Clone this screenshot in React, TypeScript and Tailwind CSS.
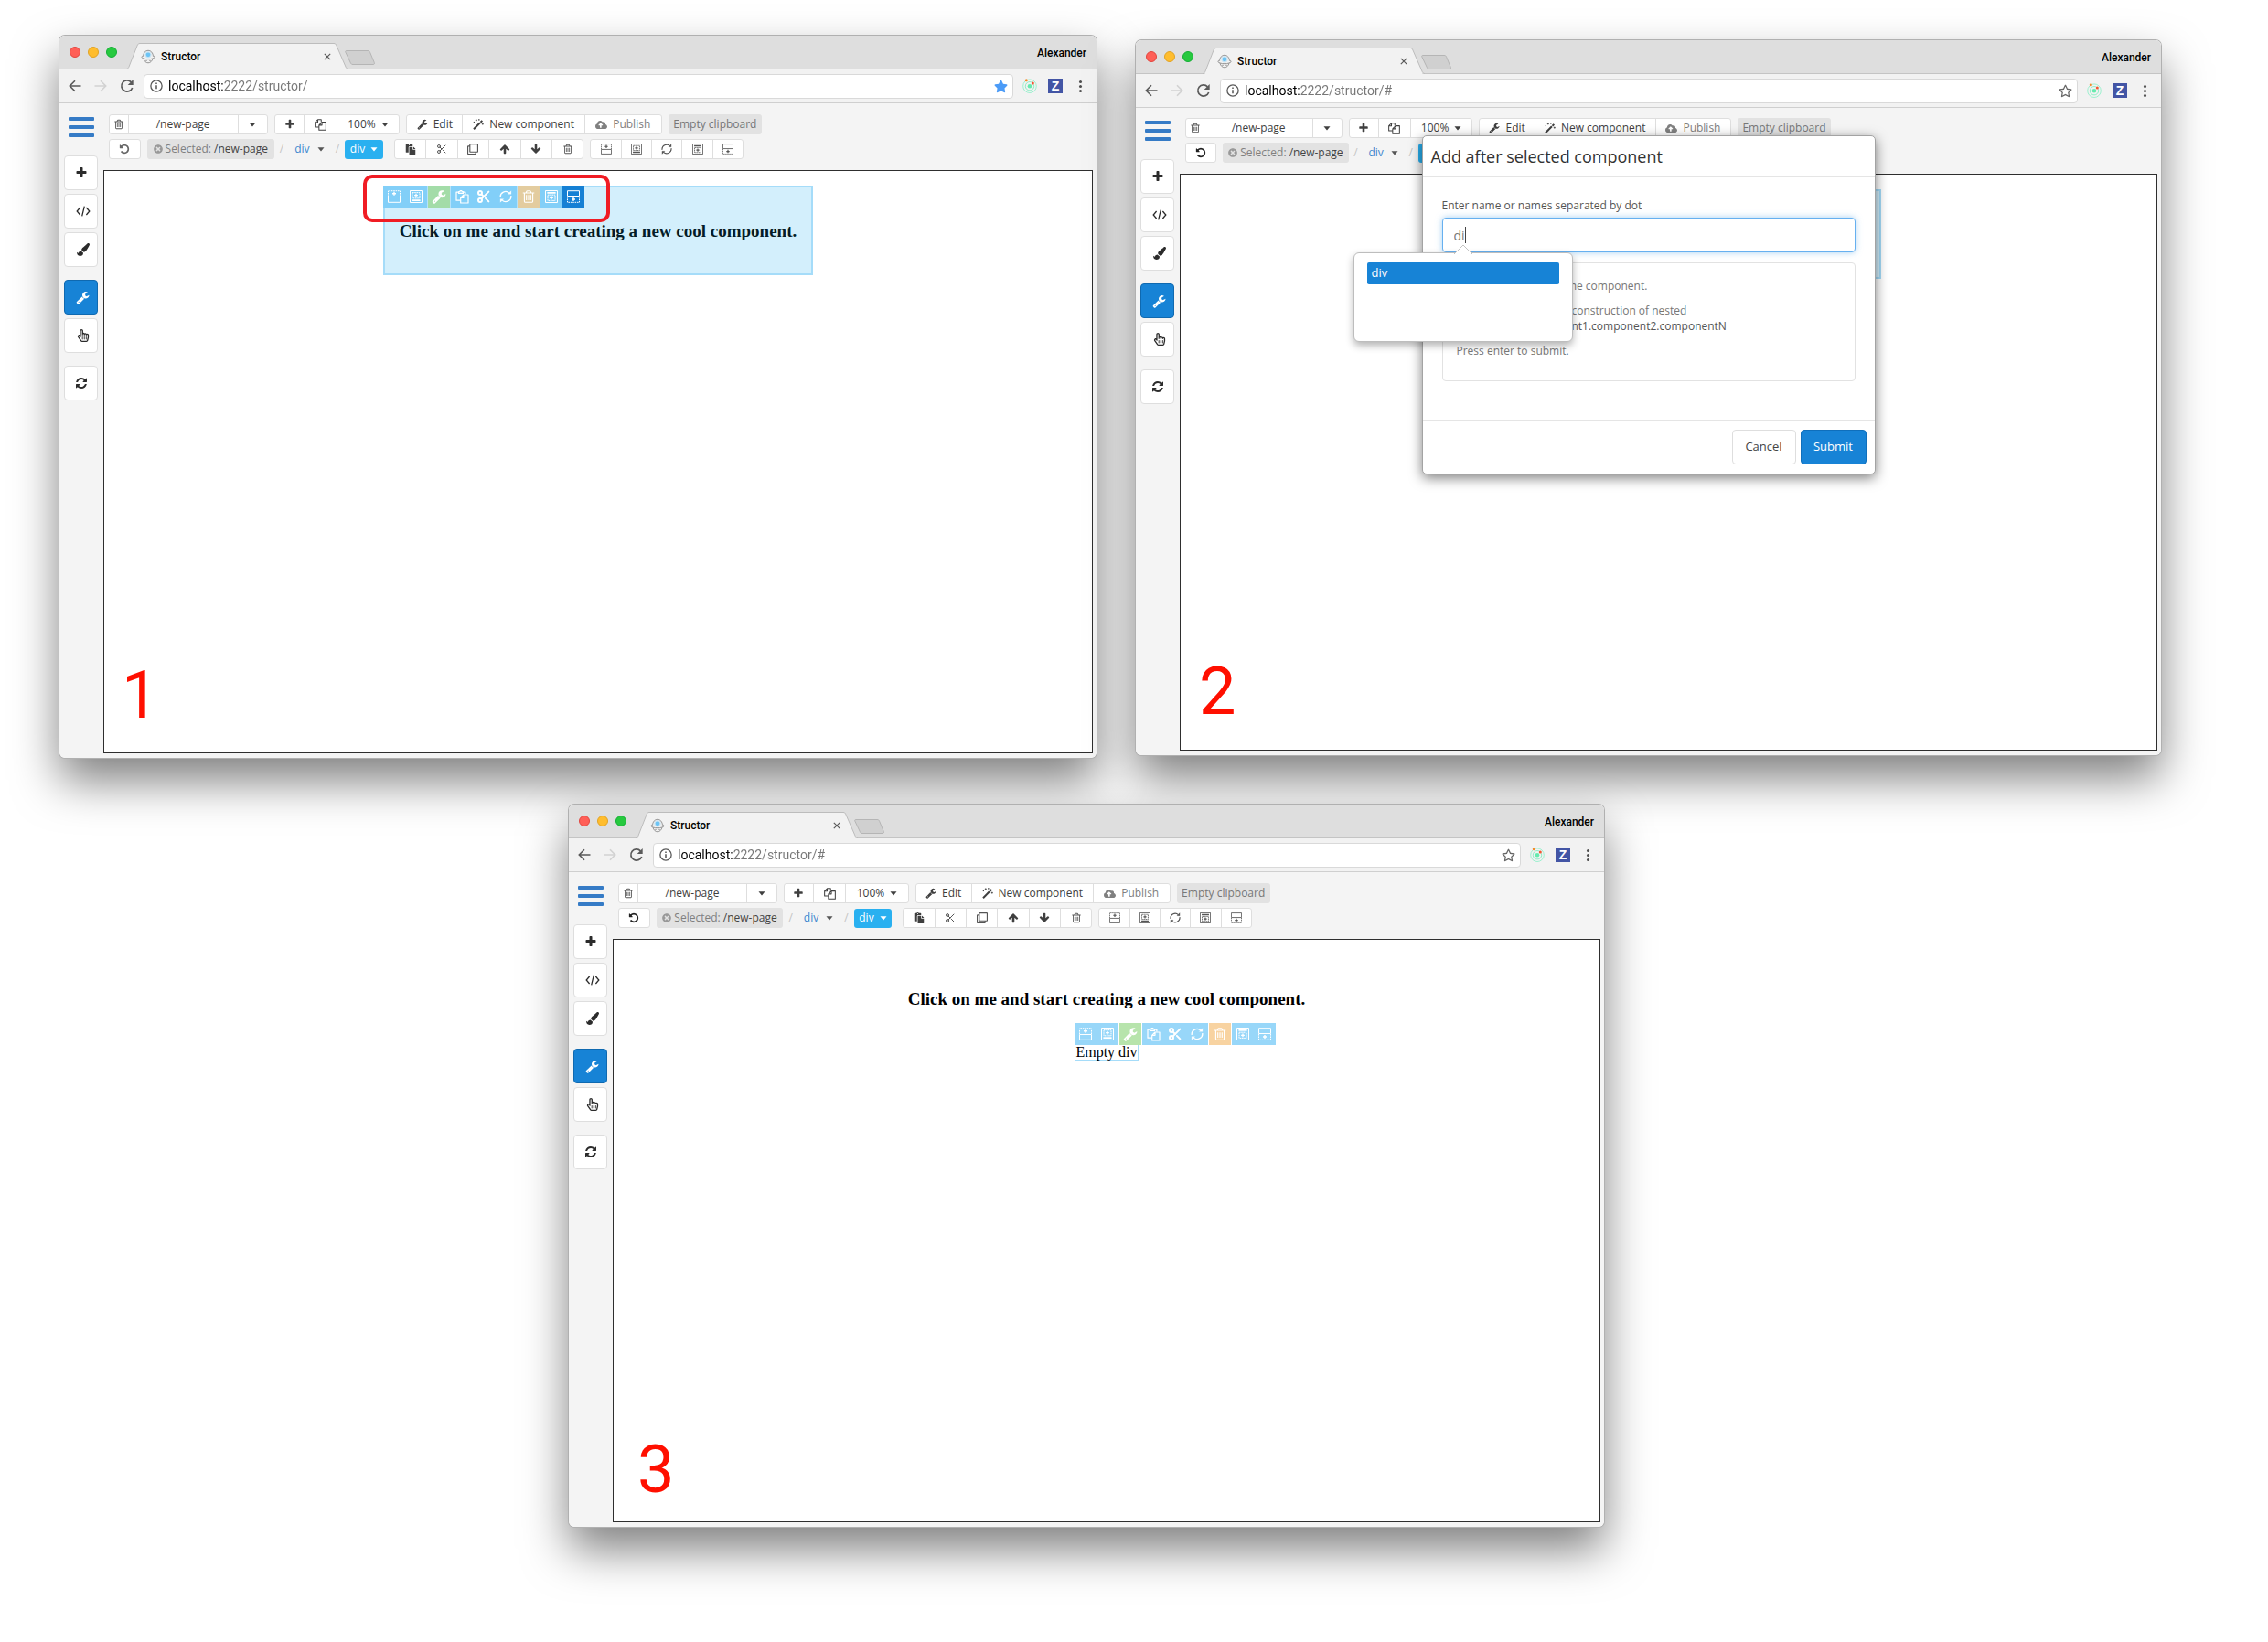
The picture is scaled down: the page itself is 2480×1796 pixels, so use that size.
import React from "react";
import { Scissors } from "lucide-react";
import {
  FaPaintBrush,
  FaRegHandPointer,
  FaTimesCircle,
  FaCloudUploadAlt,
  FaPaste,
  FaRegClone,
  FaStar,
  FaRegStar,
} from "react-icons/fa";

type IconProps = { className?: string };

function Glyph({ d, className = "size-3", flip = false }: IconProps & { d: string; flip?: boolean }) {
  return (
    <svg viewBox="0 0 1792 1792" className={className} fill="currentColor" aria-hidden="true">
      <path d={d} transform={flip ? "rotate(180 896 896)" : undefined} />
    </svg>
  );
}

const PLUS =
  "M1600 736v192q0 40-28 68t-68 28h-416v416q0 40-28 68t-68 28h-192q-40 0-68-28t-28-68v-416h-416q-40 0-68-28t-28-68v-192q0-40 28-68t68-28h416v-416q0-40 28-68t68-28h192q40 0 68 28t28 68v416h416q40 0 68 28t28 68z";
const TRASH =
  "M704 736v576q0 14-9 23t-23 9h-64q-14 0-23-9t-9-23v-576q0-14 9-23t23-9h64q14 0 23 9t9 23zm256 0v576q0 14-9 23t-23 9h-64q-14 0-23-9t-9-23v-576q0-14 9-23t23-9h64q14 0 23 9t9 23zm256 0v576q0 14-9 23t-23 9h-64q-14 0-23-9t-9-23v-576q0-14 9-23t23-9h64q14 0 23 9t9 23zm128 724v-948h-896v948q0 22 7 40.5t14.5 27 10.5 8.5h832q3 0 10.5-8.5t14.5-27 7-40.5zm-672-1076h448l-48-117q-7-9-17-11h-317q-10 2-17 11zm928 32v64q0 14-9 23t-23 9h-96v948q0 83-47 143.5t-113 60.5h-832q-66 0-113-58.5t-47-141.5v-952h-96q-14 0-23-9t-9-23v-64q0-14 9-23t23-9h309l70-167q15-37 54-63t79-26h320q40 0 79 26t54 63l70 167h309q14 0 23 9t9 23z";
const WRENCH =
  "M448 1472q0-26-19-45t-45-19-45 19-19 45 19 45 45 19 45-19 19-45zm644-420l-682 682q-37 37-90 37-52 0-91-37l-106-108q-38-36-38-90 0-53 38-91l681-681q39 98 114.5 173.5t173.5 114.5zm634-435q0 39-23 106-47 134-164.5 217.5t-258.5 83.5q-185 0-316.5-131.5t-131.5-316.5 131.5-316.5 316.5-131.5q58 0 121.5 16.5t107.5 46.5q16 11 16 28t-16 28l-293 169v224l193 107q5-3 79-48.5t135.5-81 70.5-35.5q15 0 23.5 10t8.5 25z";
const REFRESH =
  "M1639 1056q0 5-1 7-64 268-268 434.5t-478 166.5q-146 0-282.5-55t-243.5-157l-129 129q-19 19-45 19t-45-19-19-45v-448q0-26 19-45t45-19h448q26 0 45 19t19 45-19 45l-137 137q71 66 161 102t187 36q134 0 250-65t186-179q11-17 53-117 8-23 30-23h192q13 0 22.5 9.5t9.5 22.5zm25-800v448q0 26-19 45t-45 19h-448q-26 0-45-19t-19-45 19-45l138-138q-148-137-349-137-134 0-250 65t-186 179q-11 17-53 117-8 23-30 23h-199q-13 0-22.5-9.5t-9.5-22.5v-7q65-268 270-434.5t480-166.5q146 0 284 55.5t245 156.5l130-129q19-19 45-19t45 19 19 45z";
const ARROW =
  "M1675 971q0 51-37 90l-75 75q-38 38-91 38-54 0-90-38l-294-293v704q0 52-37.5 84.5t-90.5 32.5h-128q-53 0-90.5-32.5t-37.5-84.5v-704l-294 293q-36 38-90 38t-90-38l-75-75q-38-38-38-90 0-53 38-91l651-651q35-37 90-37 54 0 91 37l651 651q37 39 37 91z";
const UNDO =
  "M1664 896q0 156-61 298t-164 245-245 164-298 61q-172 0-327-72.5t-264-204.5q-7-10-6.5-22.5t8.5-20.5l137-138q10-9 25-9 16 2 23 12 73 95 179 147t225 52q104 0 198.5-40.5t163.5-109.5 109.5-163.5 40.5-198.5-40.5-198.5-109.5-163.5-163.5-109.5-198.5-40.5q-98 0-188 35.5t-160 101.5l137 138q31 30 14 69-17 40-59 40h-448q-26 0-45-19t-19-45v-448q0-42 40-59 39-17 69 14l130 129q107-101 244.5-156.5t284.5-55.5q156 0 298 61t245 164 164 245 61 298z";

function Caret() {
  return (
    <svg viewBox="0 0 8 5" className="h-[5px] w-2 shrink-0" fill="currentColor" aria-hidden="true">
      <path d="M0.5 0.3H7.5L4 4.5z" />
    </svg>
  );
}

function CodeIcon() {
  return (
    <svg viewBox="0 0 16 14" className="h-[14px] w-4" fill="none" stroke="currentColor" strokeWidth="1.3" aria-hidden="true">
      <path d="M4.6 3L1.2 7l3.4 4M11.400 3l3.400 4-3.400 4M9.300 1.700L6.700 12.300" />
    </svg>
  );
}

function Wand() {
  return (
    <svg viewBox="0 0 12 12" className="size-3 shrink-0" fill="none" stroke="currentColor" aria-hidden="true">
      <path d="M1 11.200L7.900 4.300" strokeWidth="2" />
      <path d="M8.500 3.700l1.800-1.800" strokeWidth="2" />
      <path d="M3.800.4v2M2.800 1.400h2M6.800.2v1.400M6.100.9h1.400M10.800 4.600v2M9.800 5.600h2M1.400 2.900v1.200M.8 3.500H2" strokeWidth=".8" />
    </svg>
  );
}

function Files({ className = "size-[13px]" }: IconProps) {
  return (
    <svg viewBox="0 0 14 14" className={className} fill="none" stroke="currentColor" strokeWidth="1.1" strokeLinejoin="round" aria-hidden="true">
      <path d="M5.2 9.6H.7V4L3.8.8h4v2.9M3.8.8V4H.7" />
      <path d="M8.7 3.9h4.6v9.3H5.2V7.4zM8.7 3.9v3.5H5.2" />
    </svg>
  );
}

function ClipFiles({ className = "size-[15px]" }: IconProps) {
  return (
    <svg viewBox="0 0 15 15" className={className} fill="none" stroke="currentColor" strokeWidth="1.2" strokeLinejoin="round" aria-hidden="true">
      <path d="M5.5 11.2H1V2.2h2.3M8.6 2.2h2.3v2.4M3.5 3.4V1.7h1.3a1.2 1.2 0 0 1 2.4 0h1.3v1.7z" />
      <path d="M9 5h5v9H5.7V8.3zM9 5v3.3H5.7" />
    </svg>
  );
}

function Cycle({ className = "size-3" }: IconProps) {
  return (
    <svg viewBox="0 0 14 14" className={className} fill="none" stroke="currentColor" strokeWidth="1.3" aria-hidden="true">
      <path d="M1.2 8A5.8 5.8 0 0 1 11 3.1M12.8 6A5.8 5.8 0 0 1 3 10.9" />
      <path d="M12.9.7v3.6H9.3zM1.1 13.3V9.7h3.6z" fill="currentColor" strokeWidth="0.3" />
    </svg>
  );
}

type Placement = "before" | "first" | "last" | "after";

function Place({ kind, className = "size-3" }: IconProps & { kind: Placement }) {
  return (
    <svg viewBox="0 0 14 14" className={className} fill="none" stroke="currentColor" strokeWidth="1" aria-hidden="true">
      {kind === "before" && (
        <>
          <path d="M.5 7.5h13v5.8H.5z" />
          <path d="M.5 7V.7h13V7" strokeDasharray="1.6 .8" />
          <path d="M7 1.8v4M5 3.8h4" strokeWidth="1.4" />
        </>
      )}
      {kind === "after" && (
        <>
          <path d="M.5.7h13v5.8H.5z" />
          <path d="M.5 7v6.3h13V7" strokeDasharray="1.6 .8" />
          <path d="M7 8v4M5 10h4" strokeWidth="1.4" />
        </>
      )}
      {kind === "first" && (
        <>
          <path d="M.5.5h13v13H.5z" />
          <path d="M3 2.6h8v6.2H3z" strokeDasharray="1.6 .6" />
          <path d="M7 3.8v3.8M5.1 5.7h3.8" strokeWidth="1.3" />
          <path d="M2.4 11.2h9.2" strokeWidth="1.8" />
        </>
      )}
      {kind === "last" && (
        <>
          <path d="M.5.5h13v13H.5z" />
          <path d="M3 5.2h8v6.2H3z" strokeDasharray="1.6 .6" />
          <path d="M7 6.4v3.8M5.1 8.3h3.8" strokeWidth="1.3" />
          <path d="M2.4 2.8h9.2" strokeWidth="1.8" />
        </>
      )}
    </svg>
  );
}

function StructorLogo() {
  return (
    <svg viewBox="0 0 16 16" className="size-4" fill="none" aria-hidden="true">
      <circle cx="8" cy="5.8" r="2.4" fill="#6cc5f5" />
      <circle cx="8" cy="5.8" r="3.6" fill="#6cc5f5" opacity=".3" />
      <path d="M2.6 7.6C2.6 4 5 1.3 8 1.3s5.4 2.7 5.4 6.3" stroke="#8b8b8b" strokeWidth=".9" />
      <path d="M2.6 7C1 7.4.6 8.2 1 8.8c1 1 3.500 1.900 7 1.900s6-.9 7-1.900c.4-.6 0-1.400-1.600-1.800" stroke="#8b8b8b" strokeWidth=".9" />
      <path d="M3 10c.6 2.800 2.600 4.800 5 4.800s4.400-2 5-4.800M5.200 12.300h1.600M9.200 12.300h1.600" stroke="#8b8b8b" strokeWidth=".9" />
    </svg>
  );
}

function Atom() {
  return (
    <svg viewBox="0 0 16 16" className="size-4" fill="none" aria-hidden="true">
      <circle cx="8" cy="8.200" r="7.300" stroke="#9df0cf" strokeWidth="1" />
      <circle cx="8" cy="8.200" r="4.700" stroke="#8eeec6" strokeWidth="1" />
      <circle cx="8" cy="8.200" r="2.300" fill="#66eaae" />
      <circle cx="4.300" cy="1.700" r="1.500" fill="#f58a2a" />
      <circle cx="11.300" cy="5" r="1.500" fill="#f4552f" />
    </svg>
  );
}

function TitleBar() {
  return (
    <div className="flex h-[37px] items-end border-b border-[#c4c4c4] bg-[#dedede] pr-[11px] pl-[11px]">
      <div className="flex h-9 w-[62px] shrink-0 items-center gap-2">
        <button aria-label="Close window" className="size-3 rounded-full border border-[#e2463f] bg-[#ff5f57]" />
        <button aria-label="Minimize window" className="size-3 rounded-full border border-[#e1a325] bg-[#ffbd2e]" />
        <button aria-label="Zoom window" className="size-3 rounded-full border border-[#14ae35] bg-[#27c93f]" />
      </div>
      <div className="relative -mb-px flex h-[29px] w-[243px] shrink-0 items-center pr-4 pl-4">
        <svg viewBox="0 0 243 29" preserveAspectRatio="none" className="absolute inset-0 size-full" aria-hidden="true">
          <path d="M0 28.500C2 28.500 2.500 27 3 26L12 3C12.600 1.200 13.500.5 15 .5H227c1.500 0 2.400.7 3 2.500L240 26c.5 1 1 2.500 3 2.500" fill="#f2f2f2" stroke="#bcbcbc" />
          <path d="M3 28.500H240" stroke="#f2f2f2" />
        </svg>
        <div className="relative flex flex-1 items-center">
          <StructorLogo />
          <span className="ml-[6px] flex-1 font-[Roboto,sans-serif] text-[12px] leading-4 font-medium text-black">Structor</span>
          <button aria-label="Close tab" className="flex size-[14px] items-center justify-center text-[#5a5a5a]">
            <svg viewBox="0 0 8 8" className="size-2" fill="none" stroke="currentColor" strokeWidth="1.200">
              <path d="M.8.8l6.400 6.400M7.200.8L.8 7.200" />
            </svg>
          </button>
        </div>
      </div>
      <button aria-label="New tab" className="-ml-1 mb-1 flex h-4 w-[33px] shrink-0">
        <svg viewBox="0 0 33 16" className="size-full" aria-hidden="true">
          <path d="M2 .5H25c1.500 0 2 .4 2.600 1.700L32.300 13.500c.4 1.300 0 2-1.200 2H9c-1.500 0-2-.5-2.600-1.700L.9 2.200C.4 1 .8.500 2 .5z" fill="#d0d0d0" stroke="#b5b5b5" />
        </svg>
      </button>
      <div className="flex h-[34px] flex-1 items-center justify-end font-[Roboto,sans-serif] text-[12px] font-medium text-black">Alexander</div>
    </div>
  );
}

function NavBar({ url, starred }: { url: string; starred: boolean }) {
  return (
    <div className="flex h-[37px] items-center border-b border-[#cfcfcf] bg-[#f2f2f2] pr-4 pl-[10px] text-[#5a5a5a]">
      <button aria-label="Back" className="mr-[14px] shrink-0">
        <svg viewBox="0 0 14 14" className="size-[14px]" fill="none" stroke="currentColor" strokeWidth="1.600">
          <path d="M13.500 7H1.500M7 1.300L1.300 7 7 12.700" />
        </svg>
      </button>
      <button aria-label="Forward" className="mr-[14px] shrink-0 text-[#d2d2d2]">
        <svg viewBox="0 0 14 14" className="size-[14px]" fill="none" stroke="currentColor" strokeWidth="1.600">
          <path d="M.5 7h12M7 1.300L12.700 7 7 12.700" />
        </svg>
      </button>
      <button aria-label="Reload" className="mr-[10px] shrink-0">
        <svg viewBox="0 0 16 16" className="size-4" fill="none" stroke="currentColor" strokeWidth="1.700">
          <path d="M13.700 10A6.100 6.100 0 1 1 12.400 3.800" />
          <path d="M14.700 1v6H8.700z" fill="currentColor" stroke="none" />
        </svg>
      </button>
      <div className="flex h-[27px] min-w-0 flex-1 items-center rounded-[4px] border border-[#d9d9d9] bg-white pr-[5px] pl-[6px]">
        <svg viewBox="0 0 16 16" className="size-[14px] shrink-0" fill="none" stroke="currentColor" strokeWidth="1.500" aria-hidden="true">
          <circle cx="8" cy="8" r="7" />
          <path d="M8 7v4.800M8 4v1.800" strokeWidth="1.800" />
        </svg>
        <input
          aria-label="Address"
          defaultValue={url}
          className="ml-[6px] min-w-0 flex-1 bg-[linear-gradient(90deg,#000_0_60px,#777_60px)] bg-clip-text font-[Roboto,sans-serif] text-[14px] leading-5 text-transparent outline-none"
        />
        <button aria-label="Bookmark this page" className={starred ? "text-[#4b9bf7]" : "text-[#666]"}>
          {starred ? <FaStar className="size-[15px]" /> : <FaRegStar className="size-[15px]" />}
        </button>
      </div>
      <button aria-label="Extension" className="ml-[10px] shrink-0">
        <Atom />
      </button>
      <button aria-label="Z extension" className="ml-3 flex size-4 shrink-0 items-center justify-center bg-[#4355a5] font-['Liberation_Sans',sans-serif] text-[14px] leading-4 font-bold text-white">
        Z
      </button>
      <button aria-label="Menu" className="ml-[18px] flex w-[3px] shrink-0 flex-col gap-[2px]">
        <span className="size-[3px] rounded-full bg-[#4d4d4d]" />
        <span className="size-[3px] rounded-full bg-[#4d4d4d]" />
        <span className="size-[3px] rounded-full bg-[#4d4d4d]" />
      </button>
    </div>
  );
}

const cell = "flex min-w-0 items-center justify-center whitespace-nowrap";
const group = "flex h-[22px] divide-x divide-[#dedede] rounded-[3px] border border-[#dedede] bg-white";

function Sidebar() {
  const item = "flex h-[38px] w-[37px] items-center justify-center rounded-[4px] border border-[#dedede] bg-white text-[#2b2b2b]";
  return (
    <nav aria-label="Tools" className="flex w-12 shrink-0 flex-col gap-1 pl-[5px]">
      <button aria-label="Main menu" className="mt-[3px] mb-[16px] flex w-[37px] flex-col items-center gap-[5px]">
        <span className="h-1 w-7 rounded-[1px] bg-[#357bc6]" />
        <span className="h-1 w-7 rounded-[1px] bg-[#357bc6]" />
        <span className="h-1 w-7 rounded-[1px] bg-[#357bc6]" />
      </button>
      <button aria-label="Add" className={item}>
        <Glyph d={PLUS} className="size-[14px]" />
      </button>
      <button aria-label="Code" className={item + " pl-1"}>
        <CodeIcon />
      </button>
      <button aria-label="Style" className={item + " pl-1"}>
        <FaPaintBrush className="size-[14px]" />
      </button>
      <button aria-label="Edit mode" className="mt-[10px] flex h-[38px] w-[37px] items-center justify-center rounded-[4px] border border-[#0f69b0] bg-[#1783d6] pl-1 text-white">
        <Glyph d={WRENCH} className="size-[15px]" />
      </button>
      <button aria-label="Live mode" className={item + " pl-1"}>
        <FaRegHandPointer className="size-[14px]" />
      </button>
      <button aria-label="Reload page" className={item + " mt-[10px]"}>
        <Glyph d={REFRESH} className="size-[14px]" />
      </button>
    </nav>
  );
}

function ToolRows({ dimUndo }: { dimUndo: boolean }) {
  return (
    <div className="mx-[6px] flex w-[66%] flex-col gap-[5px] text-[12px] leading-4 text-[#3f3f3f]">
      <div className="flex gap-[7px]">
        <div className={group + " flex-[173_1_0]"}>
          <button aria-label="Delete page" className={cell + " flex-[20_1_0] text-[#555]"}>
            <Glyph d={TRASH} />
          </button>
          <button className={cell + " flex-[121_1_0]"}>/new-page</button>
          <button aria-label="Choose page" className={cell + " flex-[32_1_0]"}>
            <Caret />
          </button>
        </div>
        <div className={group + " flex-[136_1_0]"}>
          <button aria-label="Add page" className={cell + " flex-[32_1_0]"}>
            <Glyph d={PLUS} />
          </button>
          <button aria-label="Duplicate page" className={cell + " flex-[35_1_0]"}>
            <Files />
          </button>
          <button className={cell + " flex-[69_1_0] gap-[6px]"}>
            100% <Caret />
          </button>
        </div>
        <div className={group + " flex-[279_1_0]"}>
          <button className={cell + " flex-[61_1_0] gap-[6px]"}>
            <Glyph d={WRENCH} /> Edit
          </button>
          <button className={cell + " flex-[134_1_0] gap-[6px]"}>
            <Wand /> New component
          </button>
          <button className={cell + " flex-[84_1_0] gap-[6px] text-[#808080]"}>
            <FaCloudUploadAlt className="size-[13px]" /> Publish
          </button>
        </div>
        <button className={cell + " h-[22px] flex-[103_1_0] rounded-[3px] bg-[#e2e2e2] text-[#777]"}>Empty clipboard</button>
      </div>
      <div className="flex items-center pr-[20px]">
        <button aria-label="Undo" className={cell + " h-[22px] flex-[33_1_0] rounded-[3px] border border-[#dedede] bg-white " + (dimUndo ? "text-[#666]" : "text-[#222]")}>
          <Glyph d={UNDO} />
        </button>
        <button className={cell + " ml-[7px] h-[22px] flex-[140_1_0] gap-[3px] rounded-[3px] bg-[#e2e2e2] text-[#808080]"}>
          <FaTimesCircle className="size-[10px] text-[#999]" />
          <span>
            Selected: <span className="text-[#444]">/new-page</span>
          </span>
        </button>
        <div className="flex flex-[78_1_0] items-center justify-around text-[#c4c4c4]">
          <span>/</span>
          <button className="flex items-center gap-2 text-[#3d87cf]">
            div
            <span className="text-[#555]">
              <Caret />
            </span>
          </button>
          <span>/</span>
        </div>
        <button className={cell + " h-[21px] flex-[42_1_0] gap-[6px] rounded-[3px] bg-[#29b0f0] text-white"}>
          div <Caret />
        </button>
        <div className={group + " ml-3 flex-[207_1_0]"}>
          <button aria-label="Paste" className={cell + " flex-1"}>
            <FaPaste className="size-3" />
          </button>
          <button aria-label="Cut" className={cell + " flex-1 text-[#555]"}>
            <Scissors className="size-3" strokeWidth={2} />
          </button>
          <button aria-label="Clone" className={cell + " flex-1 text-[#555]"}>
            <FaRegClone className="size-3" />
          </button>
          <button aria-label="Move up" className={cell + " flex-1"}>
            <Glyph d={ARROW} />
          </button>
          <button aria-label="Move down" className={cell + " flex-1"}>
            <Glyph d={ARROW} flip />
          </button>
          <button aria-label="Delete" className={cell + " flex-1 text-[#555]"}>
            <Glyph d={TRASH} />
          </button>
        </div>
        <div className={group + " ml-[7px] flex-[167_1_0] text-[#555]"}>
          <button aria-label="Add before" className={cell + " flex-1"}>
            <Place kind="before" />
          </button>
          <button aria-label="Insert first" className={cell + " flex-1"}>
            <Place kind="first" />
          </button>
          <button aria-label="Replace" className={cell + " flex-1"}>
            <Cycle />
          </button>
          <button aria-label="Insert last" className={cell + " flex-1"}>
            <Place kind="last" />
          </button>
          <button aria-label="Add after" className={cell + " flex-1"}>
            <Place kind="after" />
          </button>
        </div>
      </div>
    </div>
  );
}

function OverlayTools({ activeAfter = false, muted = false }: { activeAfter?: boolean; muted?: boolean }) {
  const b = "flex size-6 items-center justify-center";
  const blue = muted ? " bg-[#82cff8]" : " bg-[#98d7f9]";
  return (
    <div className={"flex w-max gap-px text-white " + (muted ? "bg-[#b5e2fa]" : "bg-white")}>
      <div className="flex">
        <button aria-label="Add before" className={b + blue}>
          <Place kind="before" className="size-[14px]" />
        </button>
        <button aria-label="Insert first" className={b + blue}>
          <Place kind="first" className="size-[14px]" />
        </button>
      </div>
      <button aria-label="Options" className={b + (muted ? " bg-[#a3dca8]" : " bg-[#b7e4ac]")}>
        <Glyph d={WRENCH} className="size-4" />
      </button>
      <div className="flex">
        <button aria-label="Copy" className={b + blue}>
          <ClipFiles />
        </button>
        <button aria-label="Cut" className={b + blue}>
          <Scissors className="size-4" strokeWidth={3} />
        </button>
        <button aria-label="Replace" className={b + blue}>
          <Cycle className="size-[14px]" />
        </button>
      </div>
      <button aria-label="Delete" className={b + (muted ? " bg-[#e3cc9f]" : " bg-[#f8d3a1]")}>
        <Glyph d={TRASH} className="size-4" />
      </button>
      <div className="flex">
        <button aria-label="Insert last" className={b + blue}>
          <Place kind="last" className="size-[14px]" />
        </button>
        <button aria-label="Add after" className={b + (activeAfter ? " bg-[#1580d4]" : blue)}>
          <Place kind="after" className="size-[14px]" />
        </button>
      </div>
    </div>
  );
}

type WindowProps = {
  url: string;
  starred?: boolean;
  dimUndo?: boolean;
  compact?: boolean;
  step: string;
  stepClass: string;
  children: React.ReactNode;
  modal?: React.ReactNode;
};

function BrowserWindow({ url, starred = false, dimUndo = false, compact = false, step, stepClass, children, modal }: WindowProps) {
  return (
    <section className="relative min-w-0 rounded-[6px] shadow-[0_0_0_1px_#b0b0b0,0_25px_50px_rgba(0,0,0,0.5)]">
      <div className="overflow-hidden rounded-[6px] bg-[#f4f4f4]">
        <TitleBar />
        <NavBar url={url} starred={starred} />
        <div className={"flex pr-1 pb-[5px] " + (compact ? "pt-[11px]" : "pt-3")}>
          <Sidebar />
          <div className="flex min-w-0 flex-1 flex-col gap-3">
            <ToolRows dimUndo={dimUndo} />
            <main className={"flex flex-col items-center border border-[#2e2e2e] bg-white " + (compact ? "h-[631px]" : "h-[638px]")}>
              {children}
              <span className={"mt-auto self-start font-[Roboto,sans-serif] text-[72px] leading-[72px] text-[#ff0f00] " + stepClass}>{step}</span>
            </main>
          </div>
        </div>
      </div>
      {modal}
    </section>
  );
}

const heading = "font-['Liberation_Serif',serif] text-[19px] leading-6 font-bold whitespace-nowrap";

function HighlightedBlock({ tools }: { tools: boolean }) {
  return (
    <div className="relative mt-4 flex h-[98px] w-[43.500%] justify-center border-2 border-[#a5dcf9] bg-[#d3effc] pt-9">
      <h2 className={heading + " text-[#041c28]"}>Click on me and start creating a new cool component.</h2>
      {tools && (
        <>
          <div className="absolute -top-[2px] -left-[2px]">
            <OverlayTools activeAfter muted />
          </div>
          <div className="absolute -top-[14px] -left-6 h-[52px] w-[270px] rounded-[10px] border-4 border-[#f01c24]" />
        </>
      )}
    </div>
  );
}

function AddModal() {
  return (
    <div className="absolute inset-x-0 top-[104px] flex justify-center">
      <div role="dialog" aria-labelledby="add-title" className="relative w-[496px] rounded-[5px] border border-[#a3a3a3] bg-white text-[#777] shadow-[0_4px_14px_rgba(0,0,0,0.5)]">
        <h2 id="add-title" className="border-b border-[#e5e5e5] px-[9px] py-[10px] text-[18px] leading-6 text-[#333]">
          Add after selected component
        </h2>
        <form className="px-[21px] pt-[22px] pb-[42px]">
          <label htmlFor="names" className="block text-[12px] leading-[18px] font-medium text-[#555]">
            Enter name or names separated by dot
          </label>
          <div className="relative mt-1">
            <input
              id="names"
              defaultValue="di"
              className="h-[38px] w-full rounded-[4px] border border-[#66b0f0] bg-white px-3 text-[14px] text-[#777] shadow-[0_0_7px_rgba(102,175,233,0.6)] outline-none"
            />
            <span className="absolute top-[10px] left-[25px] h-[18px] w-px bg-[#444]" />
          </div>
          <div className="mt-[11px] flex h-[130px] flex-col gap-[10px] rounded-[4px] border border-[#e2e2e2] px-[15px] pt-4 text-[12px] leading-[17px]">
            <p>Enter a name to add one component.</p>
            <p>
              Enter a few names for construction of nested
              <br />
              components <strong className="font-medium text-[#555]">component1.component2.componentN</strong>
            </p>
            <p>Press enter to submit.</p>
          </div>
        </form>
        <div className="flex justify-end gap-[5px] border-t border-[#e5e5e5] py-[10px] pr-[9px] text-[13px]">
          <button className="h-[38px] w-[70px] rounded-[4px] border border-[#dedede] bg-white text-[#444]">Cancel</button>
          <button className="h-[38px] w-[72px] rounded-[4px] border border-[#0f6fbc] bg-[#1783d6] text-white">Submit</button>
        </div>
        <div role="listbox" aria-label="Suggestions" className="absolute top-[127px] -left-[76px] h-[98px] w-[240px] rounded-[6px] border border-[#bdbdbd] bg-white px-[14px] pt-[10px] shadow-[0_4px_9px_rgba(0,0,0,0.3)]">
          <svg viewBox="0 0 20 11" className="absolute -top-[10px] left-[109px] h-[11px] w-5" aria-hidden="true">
            <path d="M0 11L10 1l10 10" fill="#fff" stroke="#c4c4c4" />
          </svg>
          <button role="option" aria-selected="true" className="flex h-6 w-full items-center rounded-[2px] bg-[#1783d6] px-[5px] text-[13px] text-white">
            div
          </button>
        </div>
      </div>
    </div>
  );
}

export default function App() {
  return (
    <div className="flex flex-col gap-[51px] bg-white pt-[39px] pb-[126px] font-['Open_Sans',sans-serif]">
      <div className="grid grid-cols-[1134fr_1121fr] items-start gap-[43px] pr-[117px] pl-[65px]">
        <BrowserWindow url="localhost:2222/structor/" starred dimUndo step="1" stepClass="pb-[26px] pl-[19px]">
          <HighlightedBlock tools />
        </BrowserWindow>
        <div className="pt-[5px]">
          <BrowserWindow compact url="localhost:2222/structor/#" step="2" stepClass="pb-[27px] pl-[20px]" modal={<AddModal />}>
            <HighlightedBlock tools={false} />
          </BrowserWindow>
        </div>
      </div>
      <div className="grid grid-cols-[622fr_1132fr_726fr]">
        <div className="col-start-2">
          <BrowserWindow url="localhost:2222/structor/#" step="3" stepClass="pb-[20px] pl-[26px]">
            <h2 className={heading + " mt-[53px] text-black"}>Click on me and start creating a new cool component.</h2>
            <div className="relative mt-[37px] border border-[#a5dcf9] font-['Liberation_Serif',serif] text-[16px] leading-4 text-black">
              Empty div
              <div className="absolute bottom-full -left-px">
                <OverlayTools />
              </div>
            </div>
          </BrowserWindow>
        </div>
      </div>
    </div>
  );
}
